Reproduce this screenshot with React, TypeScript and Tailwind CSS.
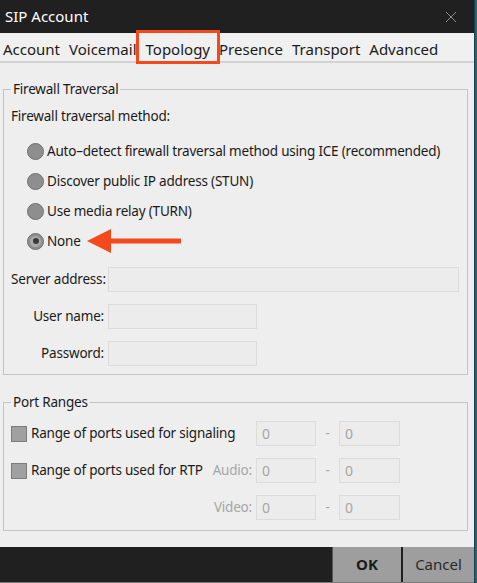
const font = "font-['Noto_Sans','Open_Sans',sans-serif]";

const tabs = ["Account", "Voicemail", "Topology", "Presence", "Transport", "Advanced"];

const methods = [
  { label: "Auto–detect firewall traversal method using ICE (recommended)", checked: false },
  { label: "Discover public IP address (STUN)", checked: false },
  { label: "Use media relay (TURN)", checked: false },
  { label: "None", checked: true },
];

function Radio({ checked }: { checked: boolean }) {
  return (
    <span className="w-[17px] h-[17px] rounded-full bg-[#8e8e8e] border border-[#6f6f6f] flex items-center justify-center shrink-0">
      {checked && (
        <span className="w-[11px] h-[11px] rounded-full bg-[#a9a9a9] flex items-center justify-center">
          <span className="w-[6px] h-[6px] rounded-full bg-[#3a3a3a]" />
        </span>
      )}
    </span>
  );
}

function Field({ value, className }: { value?: string; className: string }) {
  return (
    <div className={`h-[25px] bg-[#ececec] border border-[#dcdcdc] text-[14px] text-[#a6a6a6] pl-[5px] leading-[23px] ${className}`}>
      {value}
    </div>
  );
}

function Checkbox() {
  return <span className="w-[16px] h-[16px] bg-[#a0a0a0] border border-[#7c7c7c] shrink-0" />;
}

function PortRow({ lead, label }: { lead?: string; label?: string }) {
  return (
    <div className="flex items-center h-[25px]">
      <div className="w-[245px] flex items-center">
        {lead && (
          <>
            <Checkbox />
            <span className="ml-[4px]">{lead}</span>
          </>
        )}
        {label && <span className="ml-auto mr-[4px] text-[#a6a6a6]">{label}</span>}
      </div>
      <Field value="0" className="w-[60px]" />
      <span className="w-[23px] text-center text-[#a6a6a6]">-</span>
      <Field value="0" className="w-[61px]" />
    </div>
  );
}

export default function App() {
  return (
    <div className={`w-[477px] h-[583px] flex bg-[#2b6175] ${font}`}>
      <div className="w-[475px] h-full flex flex-col bg-[#eeeeee] border-r border-[#1c3c48]">
        <div className="h-[33px] bg-[#202020] flex items-center justify-between pl-[5px] pr-[17px] shrink-0">
          <span className="text-[15px] text-white">SIP Account</span>
          <svg width="12" height="12" viewBox="0 0 12 12" className="text-[#8f8f8f]">
            <path d="M1 1L11 11M11 1L1 11" stroke="currentColor" strokeWidth="1" />
          </svg>
        </div>

        <div className="h-[30px] shrink-0 flex items-center gap-[9px] pl-[3px] pt-[3px] border-b-2 border-[#d2d2d2] bg-[#f0f0f0]">
          {tabs.map((t) => (
            <span key={t} className="relative text-[15px] leading-[20px] text-[#1a1a1a]">
              {t}
              {t === "Topology" && (
                <span className="absolute -left-[10px] -right-[10px] -top-[9px] -bottom-[5px] border-[3px] border-[#f4481d]" />
              )}
            </span>
          ))}
        </div>

        <div className="flex-1 flex flex-col pl-[3px] pr-[6px] text-[13.5px] tracking-[-0.2px] text-[#1a1a1a] whitespace-nowrap">
          <fieldset className="mt-[17px] border border-[#c4c4c4] pl-[7px] pr-[8px] pb-[8px]">
            <legend className="px-[2px] leading-[18px]">Firewall Traversal</legend>
            <div className="mt-[8px] leading-[20px]">Firewall traversal method:</div>
            <div className="mt-[10px] flex flex-col">
              {methods.map((m) => (
                <div key={m.label} className="h-[30px] flex items-center pl-[16px] gap-[3px]">
                  <Radio checked={m.checked} />
                  <span>{m.label}</span>
                  {m.checked && (
                    <svg width="96" height="26" viewBox="0 0 96 26" className="ml-[3px]">
                      <path d="M0 13L24 1L24 10.5L94 10.5L94 15.5L24 15.5L24 25Z" fill="#f4481d" />
                    </svg>
                  )}
                </div>
              ))}
            </div>
            <div className="mt-[11px] grid grid-cols-[93px_1fr] gap-x-[4px] gap-y-[12px] items-center">
              <span className="text-right">Server address:</span>
              <Field className="w-[351px]" />
              <span className="text-right">User name:</span>
              <Field className="w-[149px]" />
              <span className="text-right">Password:</span>
              <Field className="w-[149px]" />
            </div>
          </fieldset>

          <fieldset className="mt-[18px] border border-[#c4c4c4] pl-[7px] pr-[8px] pb-[10px]">
            <legend className="px-[2px] leading-[18px]">Port Ranges</legend>
            <div className="mt-[10px] flex flex-col gap-[12px]">
              <PortRow lead="Range of ports used for signaling" />
              <PortRow lead="Range of ports used for RTP" label="Audio:" />
              <PortRow label="Video:" />
            </div>
          </fieldset>
        </div>

        <div className="h-[36px] shrink-0 bg-[#202020] flex justify-end border-b border-[#7a7a7a]">
          <button className="w-[69px] bg-[#9e9e9e] border-l border-[#555] text-[15px] font-bold text-[#1a1a1a]">OK</button>
          <button className="w-[71px] ml-[2px] bg-[#9e9e9e] text-[15px] text-[#2a2a2a]">Cancel</button>
        </div>
      </div>
    </div>
  );
}
